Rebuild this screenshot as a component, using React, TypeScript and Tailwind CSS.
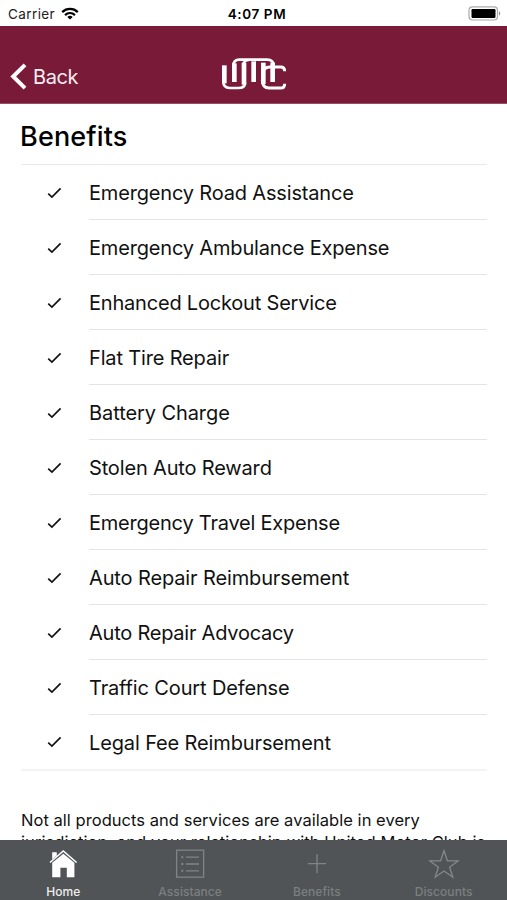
const benefits = [
  { name: "Emergency Road Assistance", tracking: "tracking-[-0.17px]" },
  { name: "Emergency Ambulance Expense", tracking: "tracking-[-0.17px]" },
  { name: "Enhanced Lockout Service", tracking: "tracking-[-0.2px]" },
  { name: "Flat Tire Repair", tracking: "tracking-[-0.16px]" },
  { name: "Battery Charge", tracking: "tracking-[-0.08px]" },
  { name: "Stolen Auto Reward", tracking: "tracking-[-0.16px]" },
  { name: "Emergency Travel Expense", tracking: "tracking-[-0.22px]" },
  { name: "Auto Repair Reimbursement", tracking: "tracking-[-0.13px]" },
  { name: "Auto Repair Advocacy", tracking: "tracking-[-0.24px]" },
  { name: "Traffic Court Defense", tracking: "tracking-[-0.14px]" },
  { name: "Legal Fee Reimbursement", tracking: "tracking-[-0.13px]" },
];

function StatusBar() {
  return (
    <div className="grid h-[26px] shrink-0 grid-cols-3 items-center bg-white pt-px text-[13.5px] leading-none text-black">
      <div className="flex items-center gap-[6px] pl-2">
        <span className="pt-[2px] tracking-[0.4px] text-[#222]">Carrier</span>
        <svg width="18" height="13" viewBox="0 0 18 13" fill="none" stroke="#000" strokeWidth="2.2">
          <path d="M1.2 5.1C5.6.9 12.4.9 16.8 5.1" />
          <path d="M4 8.1c2.9-2.7 7.1-2.7 10 0" />
          <path d="M9 12.6 6.3 10a4 4 0 0 1 5.4 0z" fill="#000" stroke="none" />
        </svg>
      </div>
      <span className="pt-[2px] pl-[7px] text-center font-semibold tracking-[0.6px]">4:07 PM</span>
      <div className="flex justify-end pr-[6px]">
        <svg width="33" height="15" viewBox="0 0 33 15">
          <rect x="1" y=".8" width="28.5" height="13.2" rx="3.5" fill="#fff" stroke="#aaa" strokeWidth="1.2" />
          <rect x="3.5" y="3" width="24" height="9" rx="1.2" fill="#000" />
          <path d="M31 5.2c1.6.8 1.6 3.6 0 4.4z" fill="#888" />
        </svg>
      </div>
    </div>
  );
}

function Logo() {
  return (
    <svg width="66" height="34" viewBox="64 168 198 102" fill="none" stroke="#fff">
      <g strokeWidth="14">
        <path d="M74 196V250" />
        <path d="M104 246V190" />
        <path d="M133 254V188" />
        <path d="M162 246V184" />
        <path d="M191 252V188" />
        <path d="M219 246V188" />
      </g>
      <g strokeWidth="8">
        <path d="M71 244Q71 264 90 264H116Q136 264 136 248" />
        <path d="M101 198Q101 179 119 179H202Q222 179 222 198" />
        <path d="M130 196Q132 180 148 180" />
        <path d="M188 240Q188 264 208 264H243Q255 264 255 251" strokeWidth="9" />
        <path d="M188 223Q191 201 210 201H243Q255 201 255 214" strokeWidth="9" />
      </g>
    </svg>
  );
}

function Header() {
  return (
    <header className="grid h-[78px] shrink-0 grid-cols-3 items-end border-b border-[#955068] bg-[#791a38]">
      <div className="flex h-[53px] items-center pl-[10px]">
        <svg width="17" height="27" viewBox="0 0 17 27" fill="none" stroke="#fff" strokeWidth="4">
          <path d="M15 1.8 3.2 13.5 15 25.2" />
        </svg>
        <span className="pl-[6px] text-[20px] leading-6 tracking-[-0.4px] text-[#f8edf1]">Back</span>
      </div>
      <div className="flex h-[47px] items-start justify-center">
        <Logo />
      </div>
    </header>
  );
}

function Check() {
  return (
    <svg width="15" height="12" viewBox="0 0 16 13" fill="none" stroke="#111" strokeWidth="1.8">
      <path d="M1.2 7.2 5.2 11 14.6 1.5" />
    </svg>
  );
}

function HomeIcon() {
  return (
    <svg width="30" height="30" viewBox="0 0 30 30">
      <path d="M4.2 3.2h4.6v3.2L4.2 10.5z" fill="#fff" />
      <path d="M2 13.5 15.3 2 28.6 13.5" fill="none" stroke="#fff" strokeWidth="1.6" />
      <path d="M4.2 13.8 15.3 4.8 26.4 13.8V28.2H18.8V18.8h-6.4v9.4H4.2z" fill="#fff" />
    </svg>
  );
}

function ListIcon() {
  return (
    <svg width="30" height="30" viewBox="0 0 30 30" fill="none" stroke="#808486" strokeWidth="1.3">
      <rect x="1.6" y="1.2" width="27" height="27" />
      <path d="M11 8.2h13M11 15h13M11 21.8h13" />
      <path d="M6.3 8.2h2M6.3 15h2M6.3 21.8h2" strokeWidth="2" />
    </svg>
  );
}

function PlusIcon() {
  return (
    <svg width="30" height="30" viewBox="0 0 30 30" stroke="#808486" strokeWidth="1.3">
      <path d="M15 5.3v19M5.8 14.6h18.4" />
    </svg>
  );
}

function StarIcon() {
  return (
    <svg width="32" height="30" viewBox="0 0 32 30" fill="none" stroke="#85888a" strokeWidth="1.3">
      <path d="M16 1.8 19.4 11.8H30.2L21.6 18.2 24.8 28.2 16 22 7.2 28.2 10.4 18.2 1.8 11.8H12.6z" />
    </svg>
  );
}

const tabs = [
  { label: "Home", icon: <HomeIcon />, color: "text-[#eeeeee]" },
  { label: "Assistance", icon: <ListIcon />, color: "text-[#7b7f81]" },
  { label: "Benefits", icon: <PlusIcon />, color: "text-[#7b7f81]" },
  { label: "Discounts", icon: <StarIcon />, color: "text-[#7b7f81]" },
];

export default function App() {
  return (
    <div className="flex h-[900px] w-[507px] flex-col overflow-hidden bg-white font-['Inter','Liberation_Sans',sans-serif] text-[#111]">
      <StatusBar />
      <Header />
      <main className="min-h-0 flex-1 overflow-hidden pr-5 pl-[21px]">
        <h1 className="-ml-px flex h-[60px] items-center pt-[6px] text-[27px] font-medium tracking-[0.15px] text-black">
          <span>Benefits</span>
        </h1>
        <ul className="border-t border-b-2 border-t-[#e8e8e8] border-b-[#f3f3f3]">
          {benefits.map((benefit, i) => (
            <li key={benefit.name} className="flex h-[55px] last:h-[54px]">
              <div className="flex w-[68px] items-center pl-[26px]">
                <Check />
              </div>
              <div className={`flex flex-1 items-center pt-[2px] text-[20px] ${i < benefits.length - 1 ? "border-b border-[#e4e4e4]" : ""}`}>
                <span className={benefit.tracking}>{benefit.name}</span>
              </div>
            </li>
          ))}
        </ul>
        <p className="pt-[38px] text-[16.5px] leading-[22px] whitespace-nowrap">
          <span className="tracking-[0.04px]">Not all products and services are available in every</span>
          <br />
          <span className="tracking-[0.07px]">jurisdiction, and your relationship with United Motor Club is</span>
        </p>
      </main>
      <nav className="grid h-[60px] shrink-0 grid-cols-4 bg-[#505456]">
        {tabs.map((tab) => (
          <div key={tab.label} className={`flex flex-col items-center pt-[9px] text-[12px] font-medium ${tab.color}`}>
            {tab.icon}
            <span className="pt-[5px] leading-[15px] tracking-[0.06px]">{tab.label}</span>
          </div>
        ))}
      </nav>
    </div>
  );
}
